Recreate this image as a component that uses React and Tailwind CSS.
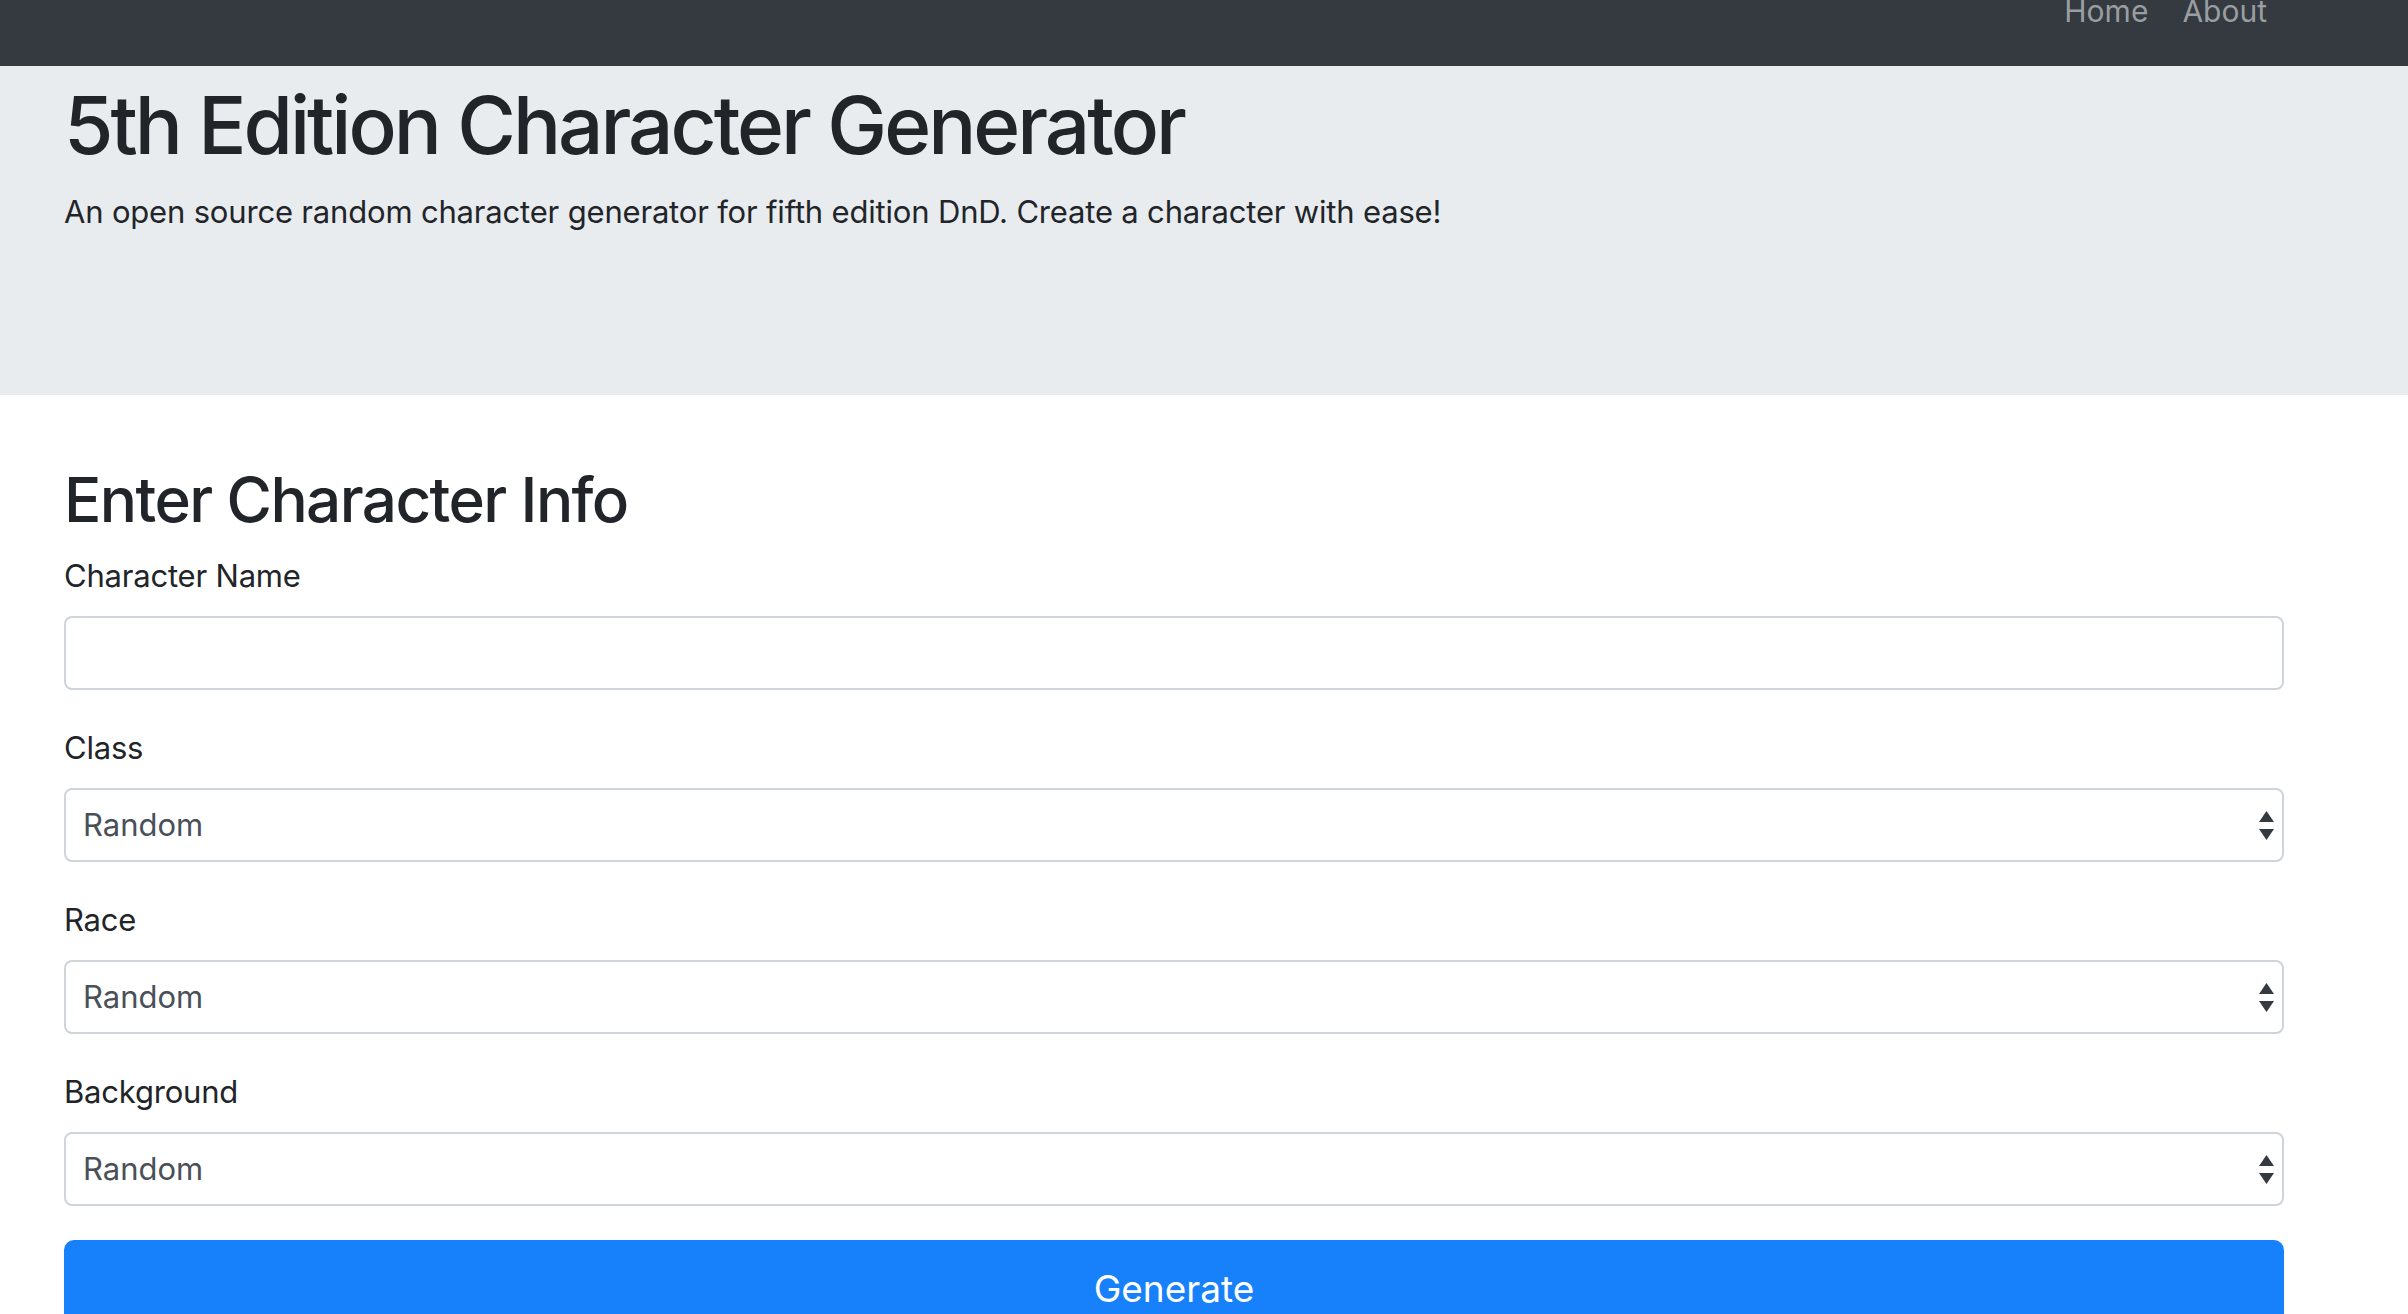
import React from 'react';

const font = { fontFamily: 'Inter, "Noto Sans", sans-serif' };

function SelectArrows() {
    return (
        <svg width="15" height="30" viewBox="0 0 15 30" className="absolute right-[10px] top-[23px] pointer-events-none">
            <path d="M7.5 0 L15 11 L0 11 Z" fill="#343a40" />
            <path d="M0 18 L15 18 L7.5 29 Z" fill="#343a40" />
        </svg>
    );
}

function Field({ label, children, first }) {
    return (
        <div className={first ? '' : 'mt-[37px]'}>
            <label className="block text-[31px] leading-[42px] text-[#212529] tracking-[-0.2px]">{label}</label>
            <div className="mt-[19px] relative">{children}</div>
        </div>
    );
}

function RandomSelect() {
    return (
        <>
            <select
                defaultValue="Random"
                className="appearance-none w-full h-[74px] border-2 border-[#ced4da] rounded-[8px] bg-white pl-[17px] pr-10 text-[31px] text-[#495057] outline-none"
            >
                <option>Random</option>
            </select>
            <SelectArrows />
        </>
    );
}

export default function App() {
    return (
        <div className="min-h-screen bg-white overflow-hidden" style={font}>
            {/* Navbar */}
            <nav className="h-[66px] bg-[#343a40] flex justify-end pr-[141px]">
                <ul className="flex gap-[34px] -mt-[11px] text-[30px] leading-[45px] text-[#9a9da1]">
                    <li>Home</li>
                    <li>About</li>
                </ul>
            </nav>

            {/* Jumbotron */}
            <header className="h-[329px] bg-[#e9ecef] pl-[64px] pt-[11px]">
                <h1 className="text-[80px] leading-[1.2] font-medium text-[#212529] tracking-[-3px]">5th Edition Character Generator</h1>
                <p className="mt-[16px] text-[31px] leading-[45px] text-[#212529] tracking-[-0.18px]">
                    An open source random character generator for fifth edition DnD. Create a character with ease!
                </p>
            </header>

            {/* Form */}
            <main className="pl-[64px] pt-[68px] w-[2284px]">
                <h2 className="text-[62px] leading-[1.2] font-medium text-[#212529] tracking-[-1.6px] mb-[18px]">Enter Character Info</h2>
                <Field label="Character Name" first>
                    <input type="text" className="w-full h-[74px] border-2 border-[#ced4da] rounded-[8px] bg-white px-[17px] text-[31px] outline-none" />
                </Field>
                <Field label="Class"><RandomSelect /></Field>
                <Field label="Race"><RandomSelect /></Field>
                <Field label="Background"><RandomSelect /></Field>
                <button className="mt-[34px] w-full h-[110px] rounded-[10px] bg-[#1781fb] text-white text-[37px] leading-[70px] flex items-start justify-center">
                    <span className="mt-[14px]">Generate</span>
                </button>
            </main>
        </div>
    );
}
